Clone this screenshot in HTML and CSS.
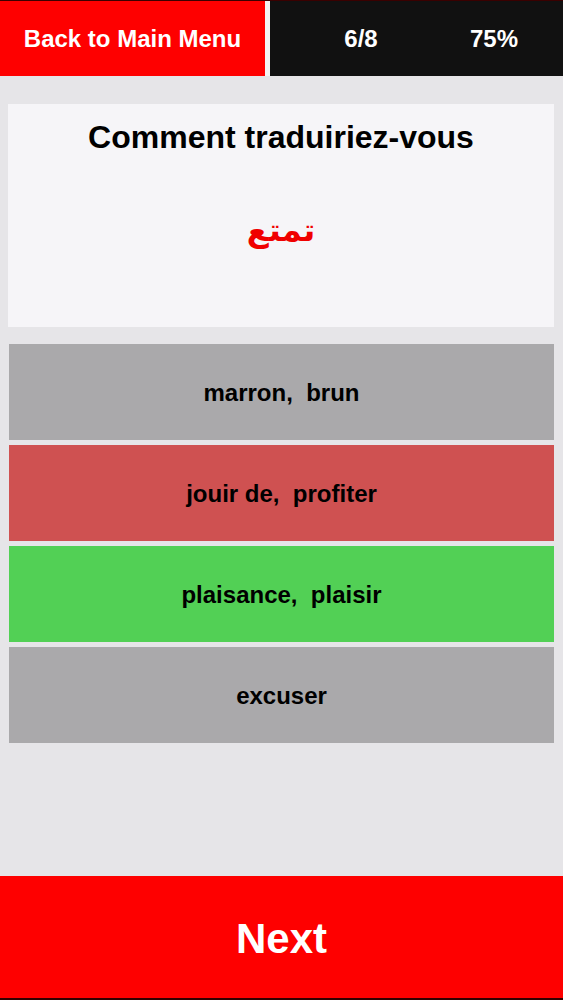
FILE: index.html
```html
<!DOCTYPE html>
<html lang="fr">
<head>
<meta charset="utf-8">
<title>Quiz</title>
<link rel="stylesheet" href="styles.css">
</head>
<body>
<div class="app">
  <header class="topbar">
    <div class="back">Back to Main Menu</div>
    <div class="divider"></div>
    <div class="stats">
      <span class="count">6/8</span>
      <span class="pct">75%</span>
    </div>
  </header>
  <main class="content">
    <section class="card">
      <h1 class="title">Comment traduiriez-vous</h1>
      <div class="word" lang="ar" dir="rtl">تمتع</div>
    </section>
    <div class="options">
      <div class="option neutral">marron,  brun</div>
      <div class="option wrong">jouir de,  profiter</div>
      <div class="option right">plaisance,  plaisir</div>
      <div class="option neutral">excuser</div>
    </div>
  </main>
  <footer class="next">Next</footer>
</div>
</body>
</html>
```
FILE: styles.css
```css
html, body {
  margin: 0;
  padding: 0;
}
body {
  background: #e6e5e8;
  font-family: "Liberation Sans", Arial, sans-serif;
}
.app {
  display: flex;
  flex-direction: column;
  height: 1000px;
}
.topbar {
  display: flex;
  height: 76px;
  border-top: 1px solid #3a0000;
  box-sizing: border-box;
  background: #f4f4f4;
}
.back {
  width: 265px;
  background: #fe0000;
  color: #fff;
  font-weight: bold;
  font-size: 24px;
  display: flex;
  align-items: center;
  justify-content: center;
}
.divider {
  width: 5px;
  background: #f4f4f4;
}
.stats {
  flex: 1;
  background: #111111;
  color: #fff;
  font-weight: bold;
  font-size: 24px;
  display: flex;
  align-items: center;
}
.count {
  width: 182px;
  text-align: center;
}
.pct {
  width: 84px;
  text-align: center;
}
.content {
  flex: 1;
  padding: 28px 9px 0 8px;
}
.card {
  background: #f6f5f8;
  height: 223px;
  box-sizing: border-box;
  padding-top: 16px;
  text-align: center;
}
.title {
  margin: 0;
  font-size: 32px;
  font-weight: bold;
  color: #000;
  line-height: 34px;
}
.word {
  margin-top: 56px;
  color: #f00000;
  font-size: 32px;
  font-weight: bold;
  font-family: "DejaVu Sans", "Noto Sans", sans-serif;
  line-height: 40px;
}
.options {
  margin-top: 17px;
  margin-left: 1px;
  display: flex;
  flex-direction: column;
  gap: 5px;
}
.option {
  height: 96px;
  box-sizing: border-box;
  padding-top: 2px;
  display: flex;
  align-items: center;
  justify-content: center;
  font-size: 24px;
  font-weight: bold;
  color: #000;
  white-space: pre;
}
.neutral { background: #aaa9ab; }
.wrong { background: #cf5151; }
.right { background: #52d055; }
.next {
  height: 124px;
  background: #fe0000;
  color: #fff;
  font-size: 42px;
  font-weight: bold;
  display: flex;
  align-items: center;
  justify-content: center;
  border-bottom: 2px solid #300;
  box-sizing: border-box;
  padding-top: 4px;
}
```
